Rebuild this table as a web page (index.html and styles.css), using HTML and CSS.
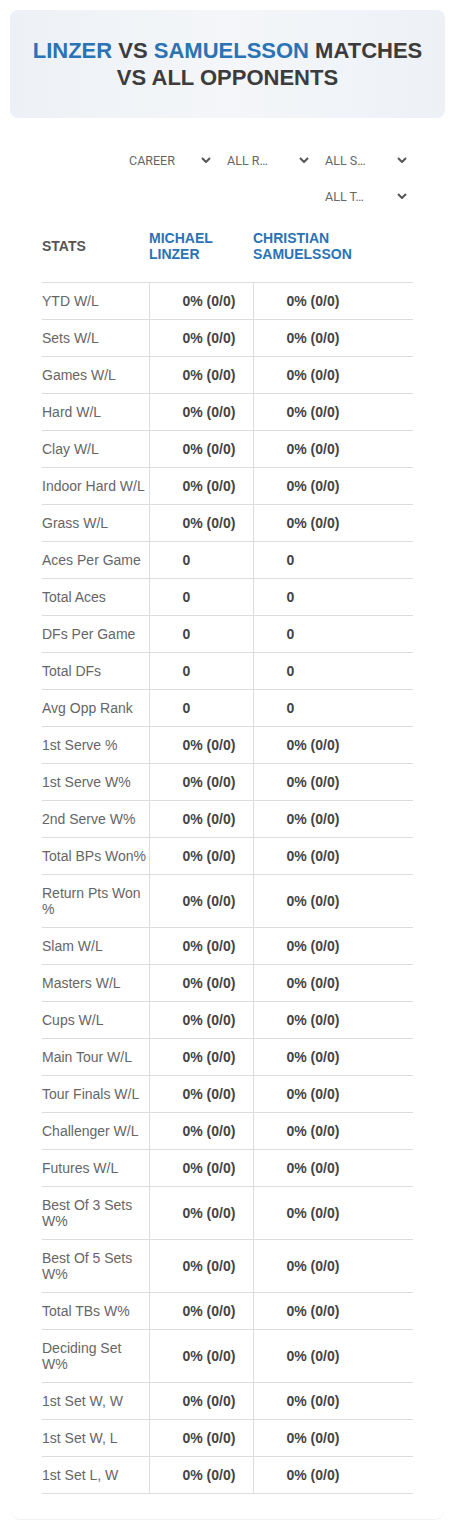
FILE: index.html
```html
<!DOCTYPE html>
<html lang="en">
<head>
    <meta charset="UTF-8">
    <meta name="viewport" content="width=device-width, initial-scale=1.0">
    <title>Linzer vs Samuelsson</title>
    <link rel="stylesheet" href="styles.css">
</head>
<body>

<div class="hero">
    <h1 class="hero-title"><span class="player">Linzer</span> vs <span class="player">Samuelsson</span> matches<br>vs all opponents</h1>
</div>

<div class="stats-card">
    <!-- Filters -->
    <div class="filters">
        <div class="filter"><span>CAREER</span><svg viewBox="0 0 10 6" class="chev"><path d="M1 1l4 4 4-4"/></svg></div>
        <div class="filter"><span>ALL R…</span><svg viewBox="0 0 10 6" class="chev"><path d="M1 1l4 4 4-4"/></svg></div>
        <div class="filter"><span>ALL S…</span><svg viewBox="0 0 10 6" class="chev"><path d="M1 1l4 4 4-4"/></svg></div>
        <div class="filter"><span>ALL T…</span><svg viewBox="0 0 10 6" class="chev"><path d="M1 1l4 4 4-4"/></svg></div>
    </div>

    <!-- Stats table -->
    <table class="stats-table">
        <colgroup>
            <col class="col-label">
            <col class="col-p1">
            <col class="col-p2">
        </colgroup>
        <thead>
            <tr>
                <th class="th-stats">STATS</th>
                <th class="th-player">MICHAEL LINZER</th>
                <th class="th-player">CHRISTIAN SAMUELSSON</th>
            </tr>
        </thead>
        <tbody id="stats-body"></tbody>
    </table>
</div>

<script>
    var rows = [
        ["YTD W/L", "0% (0/0)"],
        ["Sets W/L", "0% (0/0)"],
        ["Games W/L", "0% (0/0)"],
        ["Hard W/L", "0% (0/0)"],
        ["Clay W/L", "0% (0/0)"],
        ["Indoor Hard W/L", "0% (0/0)"],
        ["Grass W/L", "0% (0/0)"],
        ["Aces Per Game", "0"],
        ["Total Aces", "0"],
        ["DFs Per Game", "0"],
        ["Total DFs", "0"],
        ["Avg Opp Rank", "0"],
        ["1st Serve %", "0% (0/0)"],
        ["1st Serve W%", "0% (0/0)"],
        ["2nd Serve W%", "0% (0/0)"],
        ["Total BPs Won%", "0% (0/0)"],
        ["Return Pts Won %", "0% (0/0)"],
        ["Slam W/L", "0% (0/0)"],
        ["Masters W/L", "0% (0/0)"],
        ["Cups W/L", "0% (0/0)"],
        ["Main Tour W/L", "0% (0/0)"],
        ["Tour Finals W/L", "0% (0/0)"],
        ["Challenger W/L", "0% (0/0)"],
        ["Futures W/L", "0% (0/0)"],
        ["Best Of 3 Sets W%", "0% (0/0)"],
        ["Best Of 5 Sets W%", "0% (0/0)"],
        ["Total TBs W%", "0% (0/0)"],
        ["Deciding Set W%", "0% (0/0)"],
        ["1st Set W, W", "0% (0/0)"],
        ["1st Set W, L", "0% (0/0)"],
        ["1st Set L, W", "0% (0/0)"]
    ];

    var body = document.getElementById("stats-body");
    rows.forEach(function (r) {
        var tr = document.createElement("tr");
        tr.innerHTML = '<td class="td-label">' + r[0] + '</td>' +
                       '<td class="td-value">' + r[1] + '</td>' +
                       '<td class="td-value">' + r[1] + '</td>';
        body.appendChild(tr);
    });
</script>

</body>
</html>
```

FILE: styles.css
```css
body {
    margin: 0;
    padding: 10px;
    background-color: #ffffff;
    font-family: "Liberation Sans", Arial, sans-serif;
    color: #444444;
}
.hero {
    height: 108px;
    display: flex;
    align-items: center;
    justify-content: center;
    border-radius: 8px;
    background: linear-gradient(90deg, #edf1f5 0%, #f4f6f9 50%, #edf1f6 100%);
}
.hero-title {
    margin: 0;
    font-size: 22px;
    line-height: 27px;
    font-weight: bold;
    text-align: center;
    text-transform: uppercase;
    color: #3c3c3c;
    white-space: nowrap;
}
.player {
    color: #2a73b5;
}
.stats-card {
    margin: 10px 2px 0;
    padding: 18px 30px 25px;
    background-color: #ffffff;
    border-radius: 8px;
    box-shadow: 0 1px 1px rgba(0, 0, 0, 0.06);
}
.filters {
    display: flex;
    flex-wrap: wrap;
    justify-content: flex-end;
    gap: 8px 10px;
    padding-left: 80px;
}
.filter {
    width: 88px;
    height: 28px;
    display: flex;
    align-items: center;
    justify-content: space-between;
    padding-right: 6px;
    box-sizing: border-box;
    font-family: Roboto, "Liberation Sans", sans-serif;
    font-size: 12.5px;
    color: #666666;
}
.chev {
    width: 10px;
    height: 6px;
    fill: none;
    stroke: #555555;
    stroke-width: 2;
}
.stats-table {
    width: 100%;
    margin-top: 12px;
    border-collapse: collapse;
    table-layout: fixed;
    font-size: 14px;
    line-height: 16px;
}
.col-label {
    width: 107px;
}
.col-p1 {
    width: 104px;
}
.stats-table th {
    text-align: left;
    font-weight: bold;
    padding: 8px 0 20px;
    vertical-align: middle;
    border-bottom: 1px solid #dddddd;
}
.th-stats {
    color: #555555;
}
.th-player {
    color: #2a73b5;
    vertical-align: top;
}
.stats-table td {
    padding: 10px 0;
    border-bottom: 1px solid #dddddd;
    vertical-align: middle;
}
.td-label {
    color: #666666;
    border-right: 1px solid #dddddd;
}
.td-value {
    padding-left: 33px !important;
    font-weight: bold;
    color: #444444;
}
.td-value + .td-value {
    border-left: 1px solid #dddddd;
}
```
